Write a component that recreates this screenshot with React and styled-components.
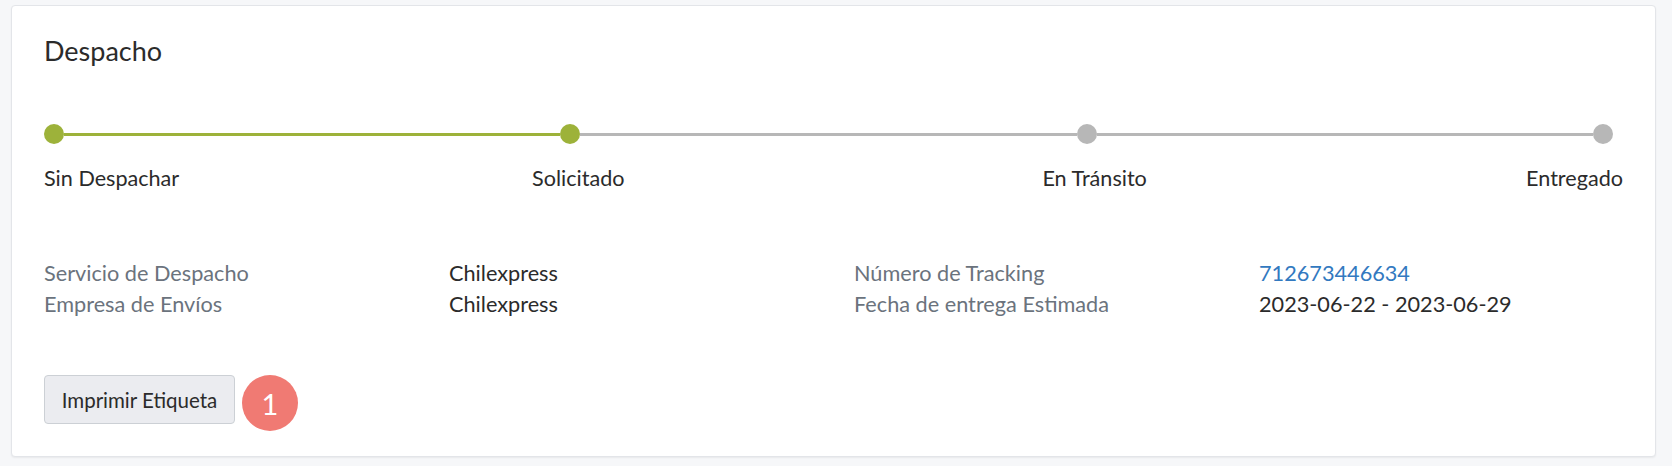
import React from "react";
import styled, { createGlobalStyle } from "styled-components";

const GlobalStyle = createGlobalStyle`
  body {
    margin: 0;
    background: #f6f7f9;
    font-family: Lato, "Open Sans", Arial, sans-serif;
    color: #2b2b2b;
  }
`;

const Card = styled.section`
  margin: 5px 16px 9px 11px;
  padding: 29px 32px 25px 32px;
  background: #ffffff;
  border: 1px solid #e3e5e9;
  border-radius: 4px;
  box-shadow: 0 1px 2px rgba(0, 0, 0, 0.06);
`;

const Title = styled.h2`
  margin: 0;
  font-size: 27px;
  line-height: 32px;
  font-weight: 400;
  color: #2b2b2b;
`;

const Stepper = styled.div`
  margin-top: 57px;
  margin-right: 10px;
  display: grid;
  grid-template-columns: 20px 1fr 20px 1fr 20px 1fr 20px;
  grid-template-rows: 20px 26px;
  row-gap: 21px;
  align-items: center;
`;

const Dot = styled.span`
  width: 20px;
  height: 20px;
  border-radius: 50%;
  background: ${(p) => (p.$done ? "#9db23a" : "#b7b7b7")};
`;

const Segment = styled.span`
  height: 3px;
  background: ${(p) => (p.$done ? "#9db23a" : "#b7b7b7")};
`;

const LabelAnchor = styled.div`
  grid-row: 2;
  grid-column: ${(p) => p.$col};
  display: flex;
  justify-content: ${(p) => p.$justify};
  padding-left: ${(p) => p.$shift || 0}px;
  margin-right: ${(p) => p.$pull || 0}px;
`;

const StepLabel = styled.span`
  white-space: nowrap;
  font-size: 21.6px;
  line-height: 26px;
  color: #2b2b2b;
`;

const Info = styled.div`
  margin-top: 67px;
  display: grid;
  grid-template-columns: 405px 405px 405px 1fr;
  grid-auto-rows: 31px;
  font-size: 21.7px;
  line-height: 31px;
`;

const Key = styled.span`
  color: #6b737d;
  white-space: nowrap;
`;

const Value = styled.span`
  color: ${(p) => (p.$link ? "#3279c0" : "#2b2b2b")};
  white-space: nowrap;
`;

const Actions = styled.div`
  margin-top: 55px;
  display: flex;
  align-items: flex-start;
  gap: 7px;
`;

const Button = styled.button`
  height: 49px;
  width: 191px;
  padding: 0;
  font-family: inherit;
  font-size: 20.5px;
  color: #2b2b2b;
  background: #ebecf0;
  border: 1px solid #ccd0d5;
  border-radius: 4px;
  cursor: pointer;
`;

const Badge = styled.span`
  width: 56px;
  height: 56px;
  border-radius: 50%;
  background: #f07a73;
  color: #ffffff;
  display: flex;
  align-items: center;
  justify-content: center;
  font-size: 29px;
`;

const steps = [
  { label: "Sin Despachar", done: true },
  { label: "Solicitado", done: true },
  { label: "En Tránsito", done: false },
  { label: "Entregado", done: false },
];

const details = [
  ["Servicio de Despacho", "Chilexpress", "Número de Tracking", "712673446634"],
  ["Empresa de Envíos", "Chilexpress", "Fecha de entrega Estimada", "2023-06-22 - 2023-06-29"],
];

const anchorProps = [
  { $justify: "flex-start" },
  { $justify: "center", $shift: 16 },
  { $justify: "center", $shift: 16 },
  { $justify: "flex-end", $pull: -10 },
];

export default function App() {
  return (
    <>
      <GlobalStyle />
      <Card>
        <Title>Despacho</Title>
        <Stepper>
          {steps.map((step, i) => (
            <React.Fragment key={step.label}>
              <Dot $done={step.done} />
              {i < steps.length - 1 && <Segment $done={steps[i + 1].done} />}
            </React.Fragment>
          ))}
          {steps.map((step, i) => (
            <LabelAnchor key={step.label} $col={i * 2 + 1} {...anchorProps[i]}>
              <StepLabel>{step.label}</StepLabel>
            </LabelAnchor>
          ))}
        </Stepper>
        <Info>
          {details.map((row) => (
            <React.Fragment key={row[0]}>
              <Key>{row[0]}</Key>
              <Value>{row[1]}</Value>
              <Key>{row[2]}</Key>
              <Value $link={row[3] === "712673446634"}>{row[3]}</Value>
            </React.Fragment>
          ))}
        </Info>
        <Actions>
          <Button>Imprimir Etiqueta</Button>
          <Badge>1</Badge>
        </Actions>
      </Card>
    </>
  );
}
